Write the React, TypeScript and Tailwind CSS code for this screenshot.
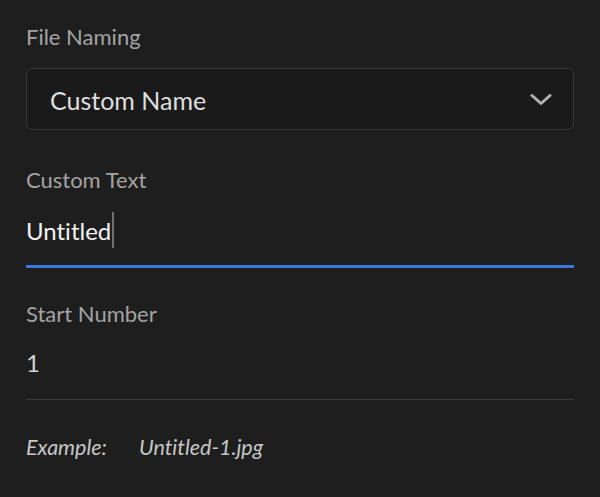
function Label({ children }: { children: string }) {
  return <p className="text-[22px] leading-[26.4px] text-[#a3a3a3]">{children}</p>;
}

function Chevron() {
  return (
    <svg width="22" height="13" viewBox="0 0 22 13" fill="none" className="text-[#b2b2b2]">
      <path d="M2 2.5 L11 10.5 L20 2.5" stroke="currentColor" strokeWidth="3" strokeLinecap="round" strokeLinejoin="round" />
    </svg>
  );
}

export default function App() {
  return (
    <div
      className="h-[497px] w-[600px] overflow-hidden bg-[#1e1e1e] px-[26px] pt-[24px] [font-variant-ligatures:none]"
      style={{ fontFamily: 'Lato, "Open Sans", sans-serif' }}
    >
      <Label>File Naming</Label>

      <button className="mt-[18px] flex h-[62px] w-full items-center justify-between rounded-[7px] border border-[#393939] bg-[#1a1a1a] pl-[23px] pr-[21px]">
        <span className="pt-[2px] text-[25px] leading-[30px] text-[#dedede]">Custom Name</span>
        <Chevron />
      </button>

      <div className="mt-[37px]">
        <Label>Custom Text</Label>
      </div>

      <div className="mt-[18px] flex h-[36px] items-center">
        <span className="pt-[3px] text-[24px] leading-[28.8px] text-[#f2f2f2]">Untitled</span>
        <span className="ml-[1px] h-[36px] w-[2px] bg-[#6f6f6f]" />
      </div>

      <div className="mt-[17px] h-[3px] w-full bg-[#3b78de]" />

      <div className="mt-[33px]">
        <Label>Start Number</Label>
      </div>

      <p className="mt-[22px] text-[24px] leading-[28.8px] text-[#d2d2d2]">1</p>

      <div className="mt-[21px] h-px w-full bg-[#3c3c3c]" />

      <div className="mt-[34px] flex text-[21.5px] italic leading-[26.4px] text-[#c6c6c6]">
        <span className="w-[113px]">Example:</span>
        <span>Untitled-1.jpg</span>
      </div>
    </div>
  );
}
